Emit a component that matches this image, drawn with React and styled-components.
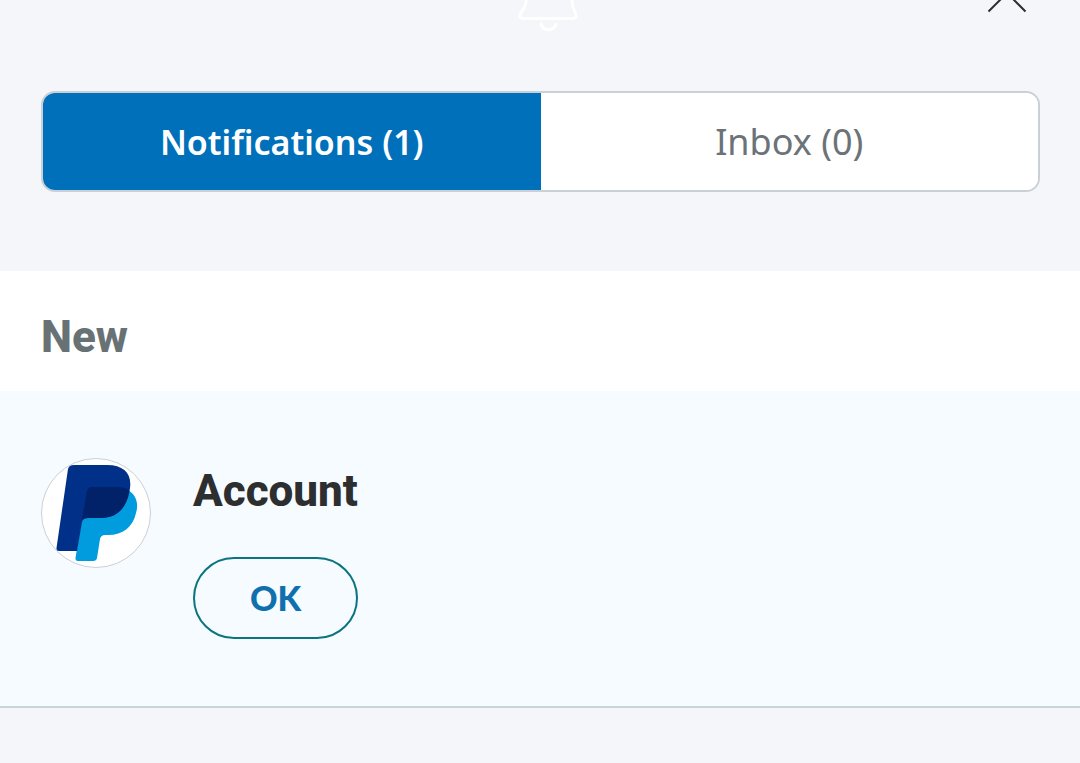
import styled, { createGlobalStyle } from "styled-components";

export default function App() {
  return (
    <>
      <GlobalStyle />
      <Header>
        <Bell viewBox="0 0 64 76" aria-hidden="true">
          <path d="M10 45 V28 C10 14 20 5 33 5 C46 5 56 14 56 28 V45 C56 53 60 55 60 60 C60 62 59 62.500 57 62.500 H7 C5 62.500 4 62 4 60 C4 55 10 53 10 45 Z" />
          <path d="M25 68 C27 75.500 38 75.500 40 68" />
        </Bell>
        <Close type="button" aria-label="Close">
          <svg viewBox="0 0 40 40" aria-hidden="true">
            <path d="M1.5 1.5 L38.5 38.5 M38.5 1.5 L1.5 38.5" />
          </svg>
        </Close>
      </Header>

      <Tabs role="tablist">
        <Tab type="button" role="tab" aria-selected="true" $active>
          Notifications (1)
        </Tab>
        <Tab type="button" role="tab" aria-selected="false">
          Inbox (0)
        </Tab>
      </Tabs>

      <main>
        <Heading>New</Heading>
        <Item>
          <Logo viewBox="0 0 110 110" role="img" aria-label="PayPal">
            <circle cx="55" cy="55" r="54.5" fill="#ffffff" stroke="#cbd0d4" />
            <path
              fill="#009cde"
              d="M87 32 C95 37 98 45 95 55 C92 69 82 77 67 77 H64 Q60 77 59 81 L56 100 Q55.500 103 52 103 H37 Q34 103 34.500 100 L41 59 L64 40 Z"
            />
            <path
              fill="#003087"
              d="M33 7 H66 C83 7 91 16 89 30 C87 49 76 60 60 60 H47 Q42 60 41 64 L36 93 H18 Q15 93 15.500 90 L27 11 Q28 7 33 7 Z"
            />
            <path
              fill="#012169"
              d="M51 29 H76 Q83 29 88 32 C86 50 76 60 60 60 H47 Q43 60 41 62 L46 33 Q47 29 51 29 Z"
            />
          </Logo>
          <Content>
            <Title>Account</Title>
            <Action type="button">OK</Action>
          </Content>
        </Item>
      </main>
    </>
  );
}

const GlobalStyle = createGlobalStyle`
  * {
    box-sizing: border-box;
  }

  body {
    margin: 0;
    background: #f4f6fa;
    font-family: "Roboto", sans-serif;
  }
`;

const Header = styled.header`
  display: grid;
  grid-template-columns: 1fr auto 1fr;
  grid-template-rows: 32px;
  align-items: end;
  margin-bottom: 59px;
  padding: 0 40px 0 56px;
  overflow: hidden;
`;

const Bell = styled.svg`
  grid-column: 2;
  width: 64px;
  height: 76px;
  fill: none;
  stroke: #ffffff;
  stroke-width: 3;
  stroke-linecap: round;
`;

const Close = styled.button`
  justify-self: end;
  padding: 0 13px 19px;
  border: none;
  background: none;
  cursor: pointer;

  svg {
    display: block;
    width: 40px;
    height: 40px;
    fill: none;
    stroke: #2c2e2f;
    stroke-width: 2;
  }
`;

const Tabs = styled.div`
  display: grid;
  grid-template-columns: 1fr 1fr;
  margin: 0 40px 79px 41px;
  border: 2px solid #c9d0d6;
  border-radius: 14px;
  background: #ffffff;
  overflow: hidden;
`;

const Tab = styled.button`
  height: 97px;
  padding: 0 16px;
  border: none;
  background: ${({ $active }) => ($active ? "#0070ba" : "#ffffff")};
  color: ${({ $active }) => ($active ? "#ffffff" : "#6c7378")};
  font-family: "Noto Sans", sans-serif;
  font-weight: ${({ $active }) => ($active ? 600 : 400)};
  font-size: ${({ $active }) => ($active ? "34px" : "36px")};
  line-height: 48px;
  cursor: pointer;
`;

const Heading = styled.h2`
  margin: 0;
  padding: 36px 41px 24px;
  background: #ffffff;
  color: #687173;
  font-weight: 800;
  font-size: 44px;
  line-height: 60px;
`;

const Item = styled.article`
  display: flex;
  gap: 42px;
  padding: 67px 41px;
  border-bottom: 2px solid #c9d3d9;
  background: #f5fbfe;
`;

const Logo = styled.svg`
  flex: none;
  width: 110px;
  height: 110px;
`;

const Content = styled.div`
  display: flex;
  flex-direction: column;
  align-items: flex-start;
  gap: 33px;
`;

const Title = styled.h3`
  margin: 0;
  color: #2c2e2f;
  font-weight: 800;
  font-size: 44px;
  line-height: 66px;
`;

const Action = styled.button`
  min-width: 165px;
  height: 82px;
  padding: 0 40px;
  border: 2px solid #0c7480;
  border-radius: 41px;
  background: transparent;
  color: #0f70ad;
  font-family: "Lato", sans-serif;
  font-weight: 900;
  font-size: 34px;
  line-height: 48px;
  cursor: pointer;
`;
